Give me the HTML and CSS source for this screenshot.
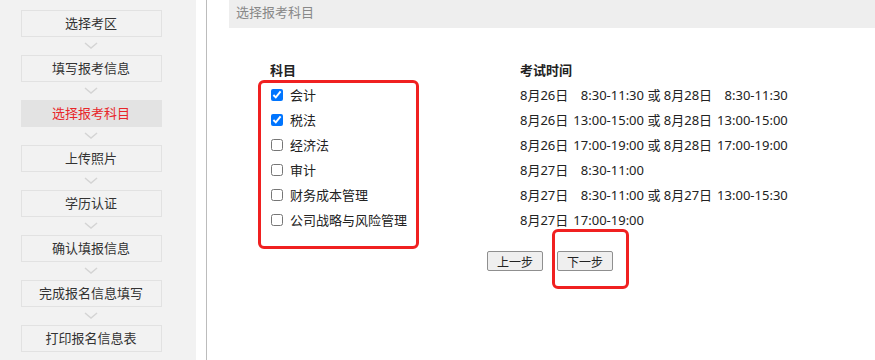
FILE: index.html
```html
<!DOCTYPE html>
<html lang="zh-CN">
<head>
    <meta charset="UTF-8">
    <title>选择报考科目</title>
    <link rel="stylesheet" href="styles.css">
</head>
<body>

<div class="page">
    <div class="steps">
        <div class="step">选择考区</div>
        <svg class="arrow" width="14" height="7" viewBox="0 0 14 7"><polyline points="1,1 7,6 13,1" fill="none" stroke="#d4d4d4" stroke-width="1.5"/></svg>
        <div class="step">填写报考信息</div>
        <svg class="arrow" width="14" height="7" viewBox="0 0 14 7"><polyline points="1,1 7,6 13,1" fill="none" stroke="#d4d4d4" stroke-width="1.5"/></svg>
        <div class="step active">选择报考科目</div>
        <svg class="arrow" width="14" height="7" viewBox="0 0 14 7"><polyline points="1,1 7,6 13,1" fill="none" stroke="#d4d4d4" stroke-width="1.5"/></svg>
        <div class="step">上传照片</div>
        <svg class="arrow" width="14" height="7" viewBox="0 0 14 7"><polyline points="1,1 7,6 13,1" fill="none" stroke="#d4d4d4" stroke-width="1.5"/></svg>
        <div class="step">学历认证</div>
        <svg class="arrow" width="14" height="7" viewBox="0 0 14 7"><polyline points="1,1 7,6 13,1" fill="none" stroke="#d4d4d4" stroke-width="1.5"/></svg>
        <div class="step">确认填报信息</div>
        <svg class="arrow" width="14" height="7" viewBox="0 0 14 7"><polyline points="1,1 7,6 13,1" fill="none" stroke="#d4d4d4" stroke-width="1.5"/></svg>
        <div class="step">完成报名信息填写</div>
        <svg class="arrow" width="14" height="7" viewBox="0 0 14 7"><polyline points="1,1 7,6 13,1" fill="none" stroke="#d4d4d4" stroke-width="1.5"/></svg>
        <div class="step">打印报名信息表</div>
    </div>

    <div class="main">
        <div class="title">选择报考科目</div>

        <table class="subjects">
            <tr>
                <th class="col-name">科目</th>
                <th>考试时间</th>
            </tr>
            <tr>
                <td><label><input type="checkbox" checked>会计</label></td>
                <td><span class="date">8月26日</span><span class="time">8:30-11:30</span> 或 <span class="date">8月28日</span><span class="time">8:30-11:30</span></td>
            </tr>
            <tr>
                <td><label><input type="checkbox" checked>税法</label></td>
                <td><span class="date">8月26日</span><span class="time">13:00-15:00</span> 或 <span class="date">8月28日</span><span class="time">13:00-15:00</span></td>
            </tr>
            <tr>
                <td><label><input type="checkbox">经济法</label></td>
                <td><span class="date">8月26日</span><span class="time">17:00-19:00</span> 或 <span class="date">8月28日</span><span class="time">17:00-19:00</span></td>
            </tr>
            <tr>
                <td><label><input type="checkbox">审计</label></td>
                <td><span class="date">8月27日</span><span class="time">8:30-11:00</span></td>
            </tr>
            <tr>
                <td><label><input type="checkbox">财务成本管理</label></td>
                <td><span class="date">8月27日</span><span class="time">8:30-11:00</span> 或 <span class="date">8月27日</span><span class="time">13:00-15:30</span></td>
            </tr>
            <tr>
                <td><label><input type="checkbox">公司战略与风险管理</label></td>
                <td><span class="date">8月27日</span><span class="time">17:00-19:00</span></td>
            </tr>
        </table>

        <div class="actions">
            <button>上一步</button>
            <button>下一步</button>
        </div>
    </div>
</div>

<!-- annotation marks -->
<div class="mark mark-subjects"></div>
<div class="mark mark-next"></div>

</body>
</html>
```

FILE: styles.css
```css
body { margin: 0; background: #fff; color: #222; font-family: "Noto Sans", "Noto Sans CJK SC", sans-serif; font-size: 13px; }
.page { display: flex; height: 360px; }

.steps { width: 196px; background: #f2f2f2; display: flex; flex-direction: column; align-items: center; padding-top: 10px; box-sizing: border-box; margin-right: 10px; }
.step { width: 141px; height: 27px; box-sizing: border-box; border: 1px solid #e2e2e2; background: #f2f2f2; display: flex; align-items: center; justify-content: center; color: #333; font-size: 13px; margin-left: -14px; padding-bottom: 3px; }
.step.active { background: #e3e3e3; border-color: #e3e3e3; color: #e8262a; }
.arrow { display: block; margin: 5px 0 6px -14px; }

.main { flex: 1; border-left: 1px solid #bcbcbc; padding-left: 22px; }
.title { height: 28px; background: #eeeeee; color: #888; font-size: 13px; line-height: 24px; padding-left: 7px; }

.subjects { margin: 28px 0 0 41px; border-collapse: collapse; }
.subjects th, .subjects td { height: 25px; padding: 0; text-align: left; white-space: nowrap; }
.subjects th { font-weight: bold; font-size: 13px; height: 26px; }
.subjects .col-name { width: 250px; }
.subjects input { width: 12px; height: 12px; margin: 0 7px 0 1px; vertical-align: -1px; accent-color: #0075ff; }
.date { display: inline-block; width: 50px; }
.time { display: inline-block; width: 74px; text-align: right; }

.actions { display: flex; justify-content: center; gap: 14px; margin-top: 19px; padding-right: 4px; }
.actions button { width: 56px; height: 20px; padding: 0; border: 1px solid #8f8f8f; border-radius: 2px; background: #efefef; font-family: "Noto Sans CJK SC", sans-serif; font-size: 12px; color: #222; }

.mark { position: absolute; border: 3px solid #f02020; border-radius: 6px; box-sizing: border-box; }
.mark-subjects { left: 258px; top: 80px; width: 161px; height: 169px; }
.mark-next { left: 552px; top: 229px; width: 77px; height: 60px; }
```
